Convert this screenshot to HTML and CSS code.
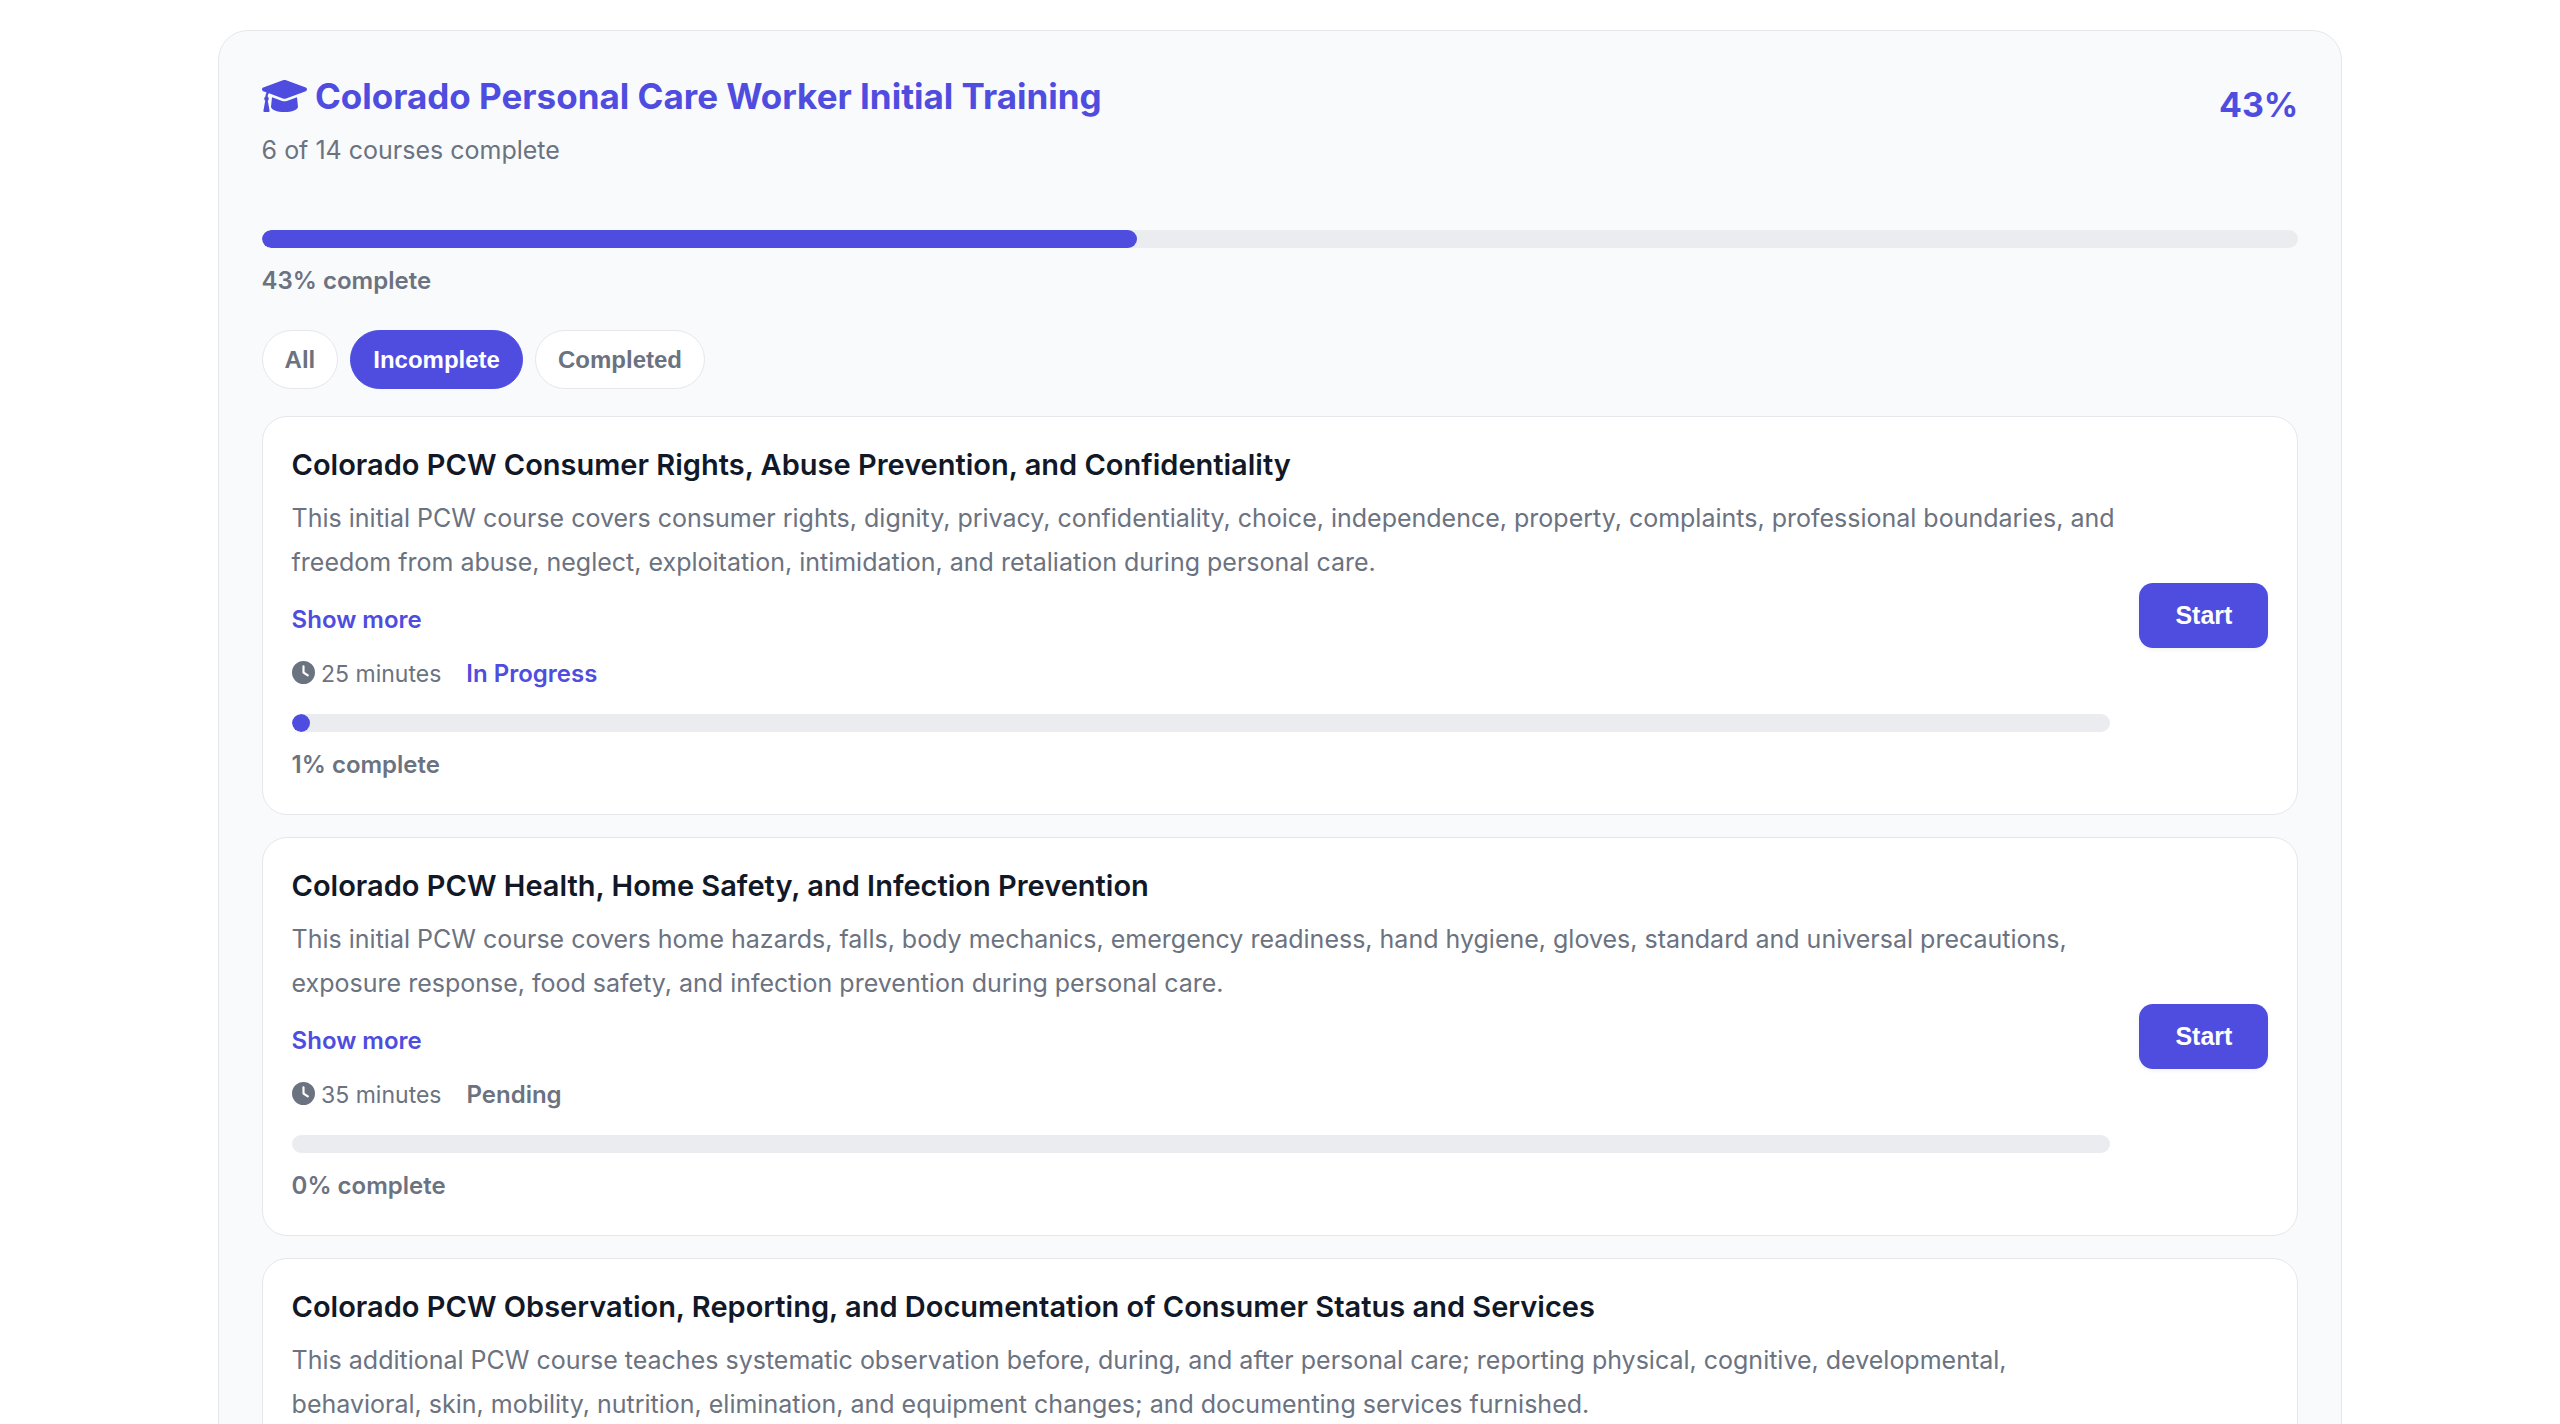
FILE: index.html
```html
<!DOCTYPE html>
<html lang="en">
<head>
  <meta charset="UTF-8">
  <meta name="viewport" content="width=device-width, initial-scale=1.0">
  <title>Colorado Personal Care Worker Initial Training</title>
  <link rel="stylesheet" href="styles.css">
</head>
<body>
  <main class="training">
    <header class="training-header">
      <div>
        <h1>
          <svg class="cap-icon" viewBox="0 64 640 384" preserveAspectRatio="none" aria-hidden="true"><path d="M622.340 153.200L343.400 67.500c-15.200-4.670-31.600-4.670-46.790 0L17.660 153.200c-23.540 7.230-23.540 38.360 0 45.590l48.630 14.940c-10.670 13.190-17.230 29.280-17.880 46.900C38.780 266.150 32 276.110 32 288c0 10.780 5.680 19.850 13.860 25.650L20.330 428.530C18.110 438.520 25.710 448 35.940 448h56.110c10.240 0 17.840-9.480 15.620-19.470L82.140 313.650C90.320 307.850 96 298.780 96 288c0-11.570-6.470-21.250-15.660-26.870.76-15.020 8.440-28.300 20.690-36.720L296.600 284.500c9.060 2.780 26.440 6.250 46.790 0l278.950-85.700c23.550-7.240 23.550-38.360 0-45.600zM352.790 315.090c-28.530 8.760-52.840 3.920-65.590 0l-145.020-44.550L128 384c0 35.350 85.960 64 192 64s192-28.650 192-64l-14.180-113.470-145.030 44.560z"/></svg>
          Colorado Personal Care Worker Initial Training
        </h1>
        <p class="subtitle">6 of 14 courses complete</p>
      </div>
      <div class="percent">43%</div>
    </header>

    <div class="bar"><div class="bar-fill" style="width: 43%"></div></div>
    <p class="bar-label">43% complete</p>

    <div class="filters">
      <button type="button">All</button>
      <button type="button" class="active">Incomplete</button>
      <button type="button">Completed</button>
    </div>

    <section class="course-list">
      <article class="course-card">
        <div class="course-info">
          <h2>Colorado PCW Consumer Rights, Abuse Prevention, and Confidentiality</h2>
          <p class="description">This initial PCW course covers consumer rights, dignity, privacy, confidentiality, choice, independence, property, complaints, professional boundaries, and freedom from abuse, neglect, exploitation, intimidation, and retaliation during personal care.</p>
          <button type="button" class="show-more">Show more</button>
          <div class="meta">
            <span class="duration"><svg class="clock-icon" viewBox="0 0 512 512" aria-hidden="true"><path d="M256 0a256 256 0 1 1 0 512A256 256 0 1 1 256 0zM232 120V256c0 8 4 15.500 10.700 20l96 64c11 7.400 25.900 4.400 33.300-6.700s4.400-25.900-6.700-33.300L280 243.200V120c0-13.300-10.700-24-24-24s-24 10.700-24 24z"/></svg> 25 minutes</span>
            <span class="status in-progress">In Progress</span>
          </div>
          <div class="bar"><div class="bar-fill" style="width: 1%"></div></div>
          <p class="bar-label">1% complete</p>
        </div>
        <button type="button" class="start-button">Start</button>
      </article>

      <article class="course-card">
        <div class="course-info">
          <h2>Colorado PCW Health, Home Safety, and Infection Prevention</h2>
          <p class="description">This initial PCW course covers home hazards, falls, body mechanics, emergency readiness, hand hygiene, gloves, standard and universal precautions, exposure response, food safety, and infection prevention during personal care.</p>
          <button type="button" class="show-more">Show more</button>
          <div class="meta">
            <span class="duration"><svg class="clock-icon" viewBox="0 0 512 512" aria-hidden="true"><path d="M256 0a256 256 0 1 1 0 512A256 256 0 1 1 256 0zM232 120V256c0 8 4 15.500 10.700 20l96 64c11 7.400 25.900 4.400 33.300-6.700s4.400-25.900-6.700-33.300L280 243.200V120c0-13.300-10.700-24-24-24s-24 10.700-24 24z"/></svg> 35 minutes</span>
            <span class="status">Pending</span>
          </div>
          <div class="bar"><div class="bar-fill" style="width: 0%"></div></div>
          <p class="bar-label">0% complete</p>
        </div>
        <button type="button" class="start-button">Start</button>
      </article>

      <article class="course-card">
        <div class="course-info">
          <h2>Colorado PCW Observation, Reporting, and Documentation of Consumer Status and Services</h2>
          <p class="description">This additional PCW course teaches systematic observation before, during, and after personal care; reporting physical, cognitive, developmental, behavioral, skin, mobility, nutrition, elimination, and equipment changes; and documenting services furnished.</p>
          <button type="button" class="show-more">Show more</button>
          <div class="meta">
            <span class="status">Pending</span>
          </div>
          <div class="bar"><div class="bar-fill" style="width: 0%"></div></div>
          <p class="bar-label">0% complete</p>
        </div>
        <button type="button" class="start-button">Start</button>
      </article>
    </section>
  </main>
</body>
</html>
```
FILE: styles.css
```css
* {
  box-sizing: border-box;
}

body {
  margin: 0;
  padding: 30px 0;
  background: #fff;
  color: #6b7280;
  font-family: Inter, "Liberation Sans", sans-serif;
}

h1, h2, p {
  margin: 0;
}

button {
  font-family: "Liberation Sans", Arial, sans-serif;
  cursor: pointer;
}

.training {
  width: 83%;
  margin: 0 auto;
  padding: 43px;
  background: #f9fafc;
  border: 1px solid #e5e7eb;
  border-radius: 30px;
}

.training-header {
  display: flex;
  justify-content: space-between;
  margin-bottom: 58px;
}

h1 {
  color: #4f4de0;
  font-size: 35px;
  line-height: 44px;
  font-weight: 700;
}

.cap-icon {
  width: 45px;
  height: 32px;
  fill: currentColor;
  vertical-align: -3px;
}

.subtitle {
  margin-top: 10px;
  font-size: 25px;
  line-height: 44px;
}

.percent {
  color: #4f4de0;
  font-size: 34px;
  line-height: 62px;
  font-weight: 700;
}

.bar {
  height: 18px;
  background: #ebecf0;
  border-radius: 9px;
  overflow: hidden;
}

.bar-fill {
  height: 100%;
  background: #4f4de0;
  border-radius: 9px;
}

.bar-label {
  margin-top: 13px;
  font-size: 24px;
  line-height: 40px;
  font-weight: 600;
}

.filters {
  display: flex;
  gap: 12px;
  margin: 29px 0 27px;
}

.filters button {
  height: 59px;
  padding: 0 22px;
  background: #fff;
  color: #6b7280;
  border: 1px solid #e5e7eb;
  border-radius: 30px;
  font-size: 24px;
  font-weight: 600;
}

.filters button.active {
  background: #4f4de0;
  border-color: #4f4de0;
  color: #fff;
}

.course-list {
  display: grid;
  gap: 22px;
}

.course-card {
  display: flex;
  align-items: center;
  gap: 29px;
  padding: 29px;
  background: #fff;
  border: 1px solid #e5e7eb;
  border-radius: 25px;
}

.course-info {
  flex: 1;
}

h2 {
  color: #111827;
  font-size: 29px;
  line-height: 38px;
  font-weight: 600;
}

.description {
  margin: 12px -12px 0 0;
  font-size: 25px;
  line-height: 44px;
}

.show-more {
  display: block;
  margin-top: 22px;
  padding: 0;
  background: none;
  border: none;
  color: #4f4de0;
  font-family: inherit;
  font-size: 24px;
  line-height: 28px;
  font-weight: 600;
}

.meta {
  display: flex;
  gap: 25px;
  margin: 20px 0;
  font-size: 23px;
  line-height: 40px;
}

.clock-icon {
  width: 23px;
  height: 23px;
  fill: currentColor;
  vertical-align: -2px;
}

.status {
  font-size: 24px;
  font-weight: 600;
}

.in-progress {
  color: #4f4de0;
}

.start-button {
  height: 65px;
  padding: 0 36px;
  background: #4f4de0;
  color: #fff;
  border: none;
  border-radius: 14px;
  box-shadow: 0 2px 4px rgba(0, 0, 0, 0.05);
  font-size: 25px;
  font-weight: 600;
}
```
